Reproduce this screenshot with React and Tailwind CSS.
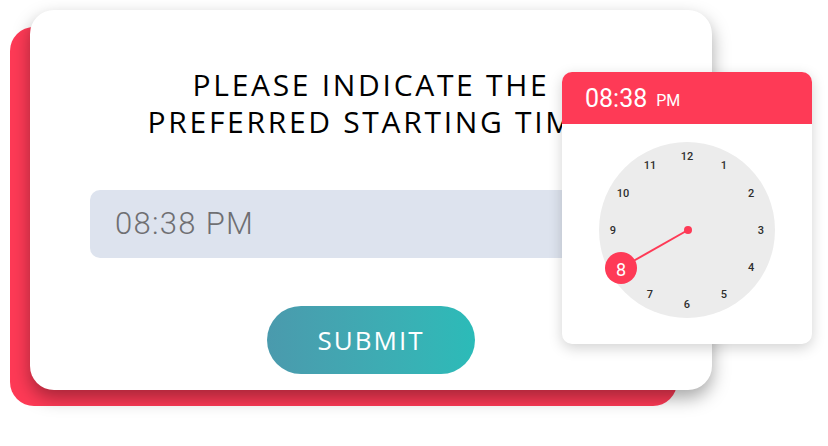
import React from "react";

const HOURS = [12, 1, 2, 3, 4, 5, 6, 7, 9, 10, 11];

const ClockFace = () => {
  const cx = 125;
  const cy = 106;
  const r = 74;
  const hand = { x: cx - 66, y: cy + 38 };
  return (
    <svg width="250" height="220" viewBox="0 0 250 220">
      <circle cx={cx} cy={cy} r="88" fill="#ececec" />
      {HOURS.map((h) => {
        const a = (h / 12) * Math.PI * 2;
        return (
          <text
            key={h}
            x={cx + Math.sin(a) * r}
            y={cy - Math.cos(a) * r}
            textAnchor="middle"
            dominantBaseline="central"
            fontSize="11"
            fontWeight="500"
            fill="#2e2e2e"
            style={{ fontFamily: "Roboto, sans-serif" }}
          >
            {h}
          </text>
        );
      })}
      <line x1={cx + 1} y1={cy} x2={hand.x} y2={hand.y} stroke="#fe3a56" strokeWidth="2" />
      <circle cx={cx + 1} cy={cy} r="4" fill="#fe3a56" />
      <circle cx={hand.x} cy={hand.y} r="16" fill="#fe3a56" />
      <text
        x={hand.x}
        y={hand.y + 1}
        textAnchor="middle"
        dominantBaseline="central"
        fontSize="18"
        fill="#fff"
        style={{ fontFamily: "Roboto, sans-serif" }}
      >
        8
      </text>
    </svg>
  );
};

const TimePopup = () => (
  <div className="absolute left-[532px] top-[62px] w-[250px] h-[272px] bg-white rounded-[10px] overflow-hidden shadow-[0_4px_14px_rgba(0,0,0,0.18)] flex flex-col">
    <div className="h-[52px] bg-[#fe3a56] flex items-center pl-[23px] text-white font-['Roboto',sans-serif]">
      <span className="text-[25px] leading-none">08:38</span>
      <span className="text-[16px] leading-none ml-[9px] mt-[5px]">PM</span>
    </div>
    <ClockFace />
  </div>
);

export default function App() {
  return (
    <div className="w-[828px] h-[446px] bg-white overflow-hidden pt-[10px] pl-[30px]">
      <div className="relative w-[682px] h-[380px]">
        <div className="absolute left-[-20px] top-[17px] w-[667px] h-[379px] rounded-[24px] bg-[#fe3a56]" />
        <div className="relative h-full rounded-[24px] bg-white shadow-[0_8px_18px_rgba(0,0,0,0.35)] flex flex-col items-center pt-[56px]">
          <h1 className="text-center text-black text-[30px] leading-[37px] tracking-[2.7px] font-normal font-['Open_Sans',sans-serif]">
            PLEASE INDICATE THE
            <br />
            PREFERRED STARTING TIME
          </h1>
          <div className="mt-[50px] w-[562px] h-[68px] rounded-[10px] bg-[#dde3ee] flex items-center pl-[25px]">
            <span className="text-[31px] font-light tracking-[1.3px] text-[#6f6f72] font-['Roboto',sans-serif]">08:38 PM</span>
          </div>
          <button className="mt-[48px] w-[208px] h-[68px] rounded-full bg-gradient-to-r from-[#4a9aad] to-[#2bbbb8] text-white text-[26px] tracking-[2px] font-['Open_Sans',sans-serif]">
            SUBMIT
          </button>
        </div>
        <TimePopup />
      </div>
    </div>
  );
}
